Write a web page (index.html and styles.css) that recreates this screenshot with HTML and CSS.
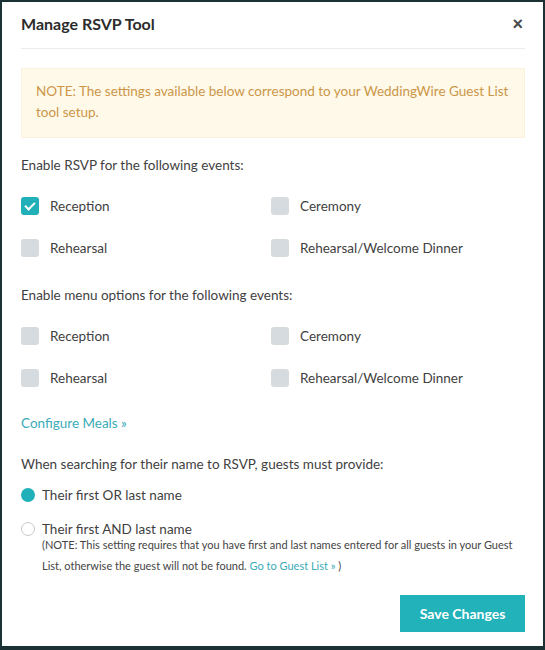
FILE: index.html
```html
<!DOCTYPE html>
<html lang="en">
<head>
    <meta charset="UTF-8">
    <meta name="viewport" content="width=device-width, initial-scale=1.0">
    <title>Manage RSVP Tool</title>
    <link rel="stylesheet" href="styles.css">
</head>
<body>
    <div class="modal">
        <div class="modal-header">
            <h2 class="modal-title">Manage RSVP Tool</h2>
            <button class="close-button" type="button">&times;</button>
        </div>

        <div class="notice">
            NOTE: The settings available below correspond to your WeddingWire Guest List tool setup.
        </div>

        <p class="section-label first">Enable RSVP for the following events:</p>
        <div class="option-grid">
            <label class="check"><span class="box checked"></span>Reception</label>
            <label class="check"><span class="box"></span>Ceremony</label>
            <label class="check"><span class="box"></span>Rehearsal</label>
            <label class="check"><span class="box"></span>Rehearsal/Welcome Dinner</label>
        </div>

        <p class="section-label">Enable menu options for the following events:</p>
        <div class="option-grid">
            <label class="check"><span class="box"></span>Reception</label>
            <label class="check"><span class="box"></span>Ceremony</label>
            <label class="check"><span class="box"></span>Rehearsal</label>
            <label class="check"><span class="box"></span>Rehearsal/Welcome Dinner</label>
        </div>

        <a class="configure-link" href="#">Configure Meals &raquo;</a>

        <p class="section-label search">When searching for their name to RSVP, guests must provide:</p>
        <div class="radio-list">
            <label class="radio"><span class="dot selected"></span>Their first OR last name</label>
            <label class="radio"><span class="dot"></span>Their first AND last name</label>
            <p class="radio-note">(NOTE: This setting requires that you have first and last names entered for all guests in your Guest <span>List, otherwise the guest will not be found.</span> <a href="#">Go to Guest List &raquo;</a> <span>)</span></p>
        </div>

        <div class="modal-footer">
            <button class="save-button" type="button">Save Changes</button>
        </div>
    </div>
</body>
</html>
```

FILE: styles.css
```css
body {
    margin: 0;
    background-color: #1c3134;
    font-family: Lato, "Open Sans", Arial, sans-serif;
    color: #3f3f3f;
}
.modal {
    margin: 2px 2px 3px 2px;
    padding: 0 18px 14px 19px;
    background-color: #fff;
    font-size: 13.5px;
}
.modal-header {
    display: flex;
    align-items: center;
    justify-content: space-between;
    padding: 12px 0 14px;
    border-bottom: 1px solid #ececec;
}
.modal-title {
    margin: 0;
    font-size: 16px;
    line-height: 20px;
    font-weight: bold;
    color: #2c2c2c;
}
.close-button {
    border: none;
    background: none;
    padding: 0 2px 0 0;
    font-size: 18px;
    line-height: 20px;
    font-weight: bold;
    color: #4a4a4a;
    cursor: pointer;
    font-family: Arial, sans-serif;
}
.notice {
    margin-top: 19px;
    padding: 12px 14px 14px;
    background-color: #fef9e8;
    border: 1px solid #faf2da;
    color: #cc9648;
    line-height: 21px;
}
.section-label {
    margin: 27px 0 21px;
    line-height: 20px;
}
.section-label.first {
    margin-top: 17px;
}
.section-label.search {
    margin: 21px 0 13px;
}
.option-grid {
    display: grid;
    grid-template-columns: 250px 1fr;
    row-gap: 22px;
}
.check {
    display: flex;
    align-items: center;
    height: 20px;
}
.box {
    width: 18px;
    height: 18px;
    margin-right: 11px;
    border-radius: 3px;
    background-color: #d6dbdf;
    position: relative;
}
.box.checked {
    background-color: #22b0b8;
}
.box.checked::after {
    content: "";
    position: absolute;
    left: 6px;
    top: 3px;
    width: 4px;
    height: 8px;
    border: solid #fff;
    border-width: 0 2px 2px 0;
    transform: rotate(45deg);
}
.configure-link {
    display: block;
    margin-top: 25px;
    line-height: 20px;
    color: #3aabb7;
    text-decoration: none;
}
.radio {
    display: flex;
    align-items: center;
    height: 16px;
}
.radio + .radio {
    margin-top: 18px;
}
.dot {
    width: 14px;
    height: 14px;
    margin-right: 7px;
    border-radius: 50%;
    border: 1px solid #c9c9c9;
    box-sizing: border-box;
}
.dot.selected {
    border: none;
    background-color: #20b0ba;
}
.radio-note {
    margin: -3px 0 0 21px;
    font-size: 11px;
    line-height: 21px;
    color: #444;
}
.radio-note a {
    color: #3aabb7;
    text-decoration: none;
}
.modal-footer {
    display: flex;
    justify-content: flex-end;
    margin-top: 19px;
}
.save-button {
    width: 125px;
    height: 37px;
    border: none;
    background-color: #22b2ba;
    color: #fff;
    font-family: inherit;
    font-size: 14px;
    font-weight: bold;
    cursor: pointer;
}
```
